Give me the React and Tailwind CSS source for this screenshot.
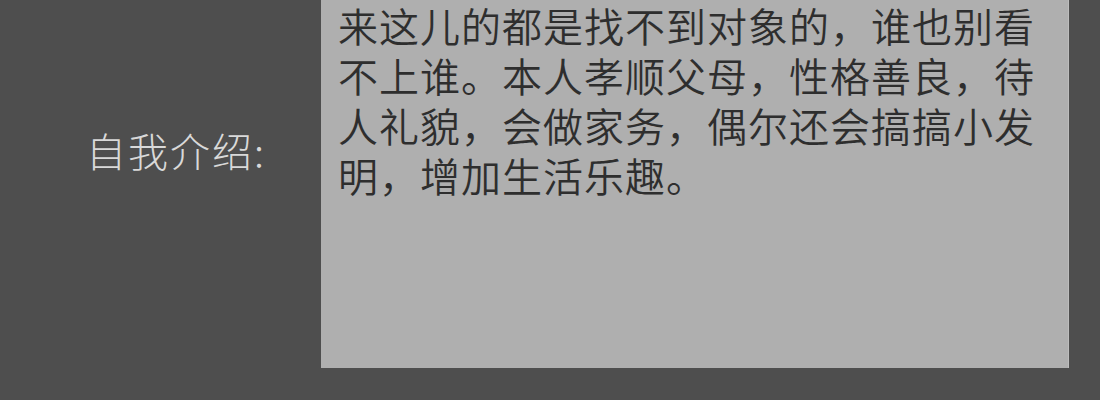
export default function App() {
  const lines = [
    "来这儿的都是找不到对象的，谁也别看",
    "不上谁。本人孝顺父母，性格善良，待",
    "人礼貌，会做家务，偶尔还会搞搞小发",
    "明，增加生活乐趣。",
  ];
  return (
    <div
      className="w-[1100px] h-[400px] bg-[#4e4e4e] flex overflow-hidden"
      style={{ fontFamily: '"Noto Sans CJK SC", "Noto Sans", sans-serif' }}
    >
      <div className="w-[321px] shrink-0 flex justify-end pr-[55px] pt-[122px]">
        <span className="text-[40px] leading-[56px] font-light text-[#d9d9d9] tracking-[2px]">自我介绍:</span>
      </div>
      <div className="w-[748px] h-[368px] bg-[#afafaf] border-r border-[#bdbdbd] pl-[17px] pt-[0px] text-[#2e2e2e] text-[40px] leading-[50px] font-[350] tracking-[1px]">
        {lines.map((l, i) => (
          <div key={i} className="whitespace-nowrap">{l}</div>
        ))}
      </div>
    </div>
  );
}
